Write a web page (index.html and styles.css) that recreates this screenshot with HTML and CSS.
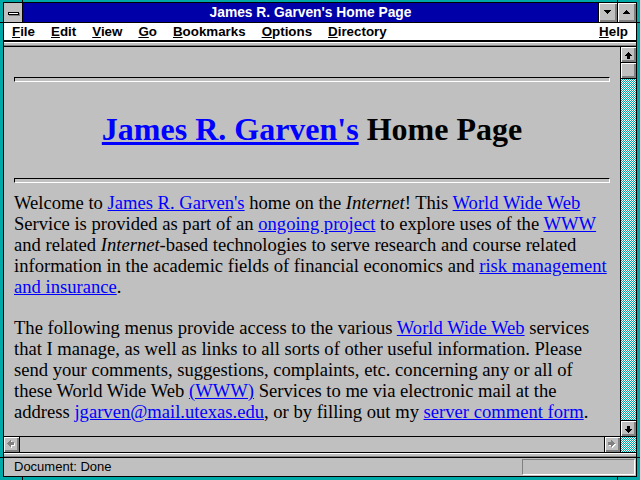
FILE: index.html
```html
<!DOCTYPE html>
<html>
<head>
<meta charset="utf-8">
<title>James R. Garven's Home Page</title>
<link rel="stylesheet" href="styles.css">
</head>
<body>
<div class="window">
  <div class="inner">
    <div class="titlebar">
      <div class="sysmenu"><span class="sysbar"></span></div>
      <div class="title">James R. Garven's Home Page</div>
      <div class="tbtn"><svg width="7" height="4" viewBox="0 0 7 4" shape-rendering="crispEdges"><path d="M0 0h7v1h-1v1h-1v1h-1v1h-1v-1h-1v-1h-1v-1h-1z" fill="#000"/></svg></div>
      <div class="tbtn"><svg width="7" height="4" viewBox="0 0 7 4" shape-rendering="crispEdges"><path d="M3 0h1v1h1v1h1v1h1v1h-7v-1h1v-1h1v-1h1z" fill="#000"/></svg></div>
    </div>
    <div class="menubar">
      <span class="mi"><u>F</u>ile</span>
      <span class="mi"><u>E</u>dit</span>
      <span class="mi"><u>V</u>iew</span>
      <span class="mi"><u>G</u>o</span>
      <span class="mi"><u>B</u>ookmarks</span>
      <span class="mi"><u>O</u>ptions</span>
      <span class="mi"><u>D</u>irectory</span>
      <span class="mi help"><u>H</u>elp</span>
    </div>
    <div class="toolsep"></div>
    <div class="main">
      <div class="content">
        <hr class="rule first">
        <h1><a href="#">James R. Garven's</a> Home Page</h1>
        <hr class="rule">
        <p class="p1">Welcome to <a href="#">James R. Garven's</a> home on the <i>Internet</i>! This <a href="#">World Wide Web</a><br>Service is provided as part of an <a href="#">ongoing project</a> to explore uses of the <a href="#">WWW</a><br>and related <i>Internet</i>-based technologies to serve research and course related<br>information in the academic fields of financial economics and <a href="#">risk management<br>and insurance</a>.</p>
        <p>The following menus provide access to the various <a href="#">World Wide Web</a> services<br>that I manage, as well as links to all sorts of other useful information. Please<br>send your comments, suggestions, complaints, etc. concerning any or all of<br>these World Wide Web <a href="#">(WWW)</a> Services to me via electronic mail at the<br>address <a href="#">jgarven@mail.utexas.edu</a>, or by filling out my <a href="#">server comment form</a>.</p>
      </div>
      <div class="vscroll">
        <div class="sbtn up"><svg width="15" height="15" viewBox="0 0 15 15" shape-rendering="crispEdges"><path d="M7 5h1v1h1v1h1v1h1v1h-2v3h-3v-3h-2v-1h1v-1h1v-1h1z" fill="#000"/></svg></div>
        <div class="sbtn thumb"></div>
        <div class="track"></div>
        <div class="sbtn down"><svg width="15" height="15" viewBox="0 0 15 15" shape-rendering="crispEdges"><path d="M6 5h3v3h2v1h-1v1h-1v1h-1v1h-1v-1h-1v-1h-1v-1h-1v-1h2z" fill="#000"/></svg></div>
      </div>
    </div>
    <div class="hscroll">
      <div class="sbtn left"><svg width="15" height="15" viewBox="0 0 15 15" shape-rendering="crispEdges"><g transform="translate(-1,0)"><path d="M5 7v1h1v1h1v1h1v1h1v-2h3v-3h-3v-2h-1v1h-1v1h-1v1h-1v1z" fill="#fff"/></g><g transform="translate(-2,-1)"><path d="M5 7v1h1v1h1v1h1v1h1v-2h3v-3h-3v-2h-1v1h-1v1h-1v1h-1v1z" fill="#808080"/></g></svg></div>
      <div class="htrack"></div>
      <div class="sbtn right"><svg width="15" height="15" viewBox="0 0 15 15" shape-rendering="crispEdges"><g transform="translate(1,0)"><path d="M10 7v1h-1v1h-1v1h-1v1h-1v-2h-3v-3h3v-2h1v1h1v1h1v1h1v1z" fill="#fff"/></g><g transform="translate(0,-1)"><path d="M10 7v1h-1v1h-1v1h-1v1h-1v-2h-3v-3h3v-2h1v1h1v1h1v1h1v1z" fill="#808080"/></g></svg></div>
      <div class="corner"></div>
    </div>
    <div class="statsep"></div>
    <div class="status">
      <span class="stext">Document: Done</span>
      <span class="field"></span>
    </div>
  </div>
</div>
</body>
</html>
```
FILE: styles.css
```css
html, body {
  margin: 0;
  padding: 0;
  background: #00a8a8;
}

.window {
  width: 640px;
  height: 480px;
  box-sizing: border-box;
  padding: 2px 3px 3px 3px;
  background-color: #00a8a8;
  background-image:
    linear-gradient(to right, transparent 22px, #000 22px, #000 23px, transparent 23px),
    linear-gradient(to right, transparent 617px, #000 617px, #000 618px, transparent 618px),
    linear-gradient(to bottom, transparent 22px, #000 22px, #000 23px, transparent 23px),
    linear-gradient(to bottom, transparent 457px, #000 457px, #000 458px, transparent 458px);
}

.inner {
  height: 100%;
  box-sizing: border-box;
  border: 1px solid #000;
  background: #c0c0c0;
  display: flex;
  flex-direction: column;
}

/* title bar */
.titlebar {
  display: flex;
  height: 19px;
  flex: none;
  background: #0000a8;
  border-bottom: 1px solid #000;
}

.sysmenu {
  width: 18px;
  background: #c0c0c0;
  border-right: 1px solid #000;
  display: flex;
  align-items: center;
  justify-content: center;
}

.sysbar {
  display: block;
  width: 9px;
  height: 1px;
  background: #fff;
  border: 1px solid #000;
  box-shadow: 1px 1px 0 #808080;
  margin-top: 1px;
}

.title {
  flex: 1;
  color: #fff;
  font-family: "Liberation Sans", Arial, sans-serif;
  font-weight: bold;
  font-size: 13.8px;
  line-height: 19px;
  text-align: center;
  white-space: nowrap;
}

.tbtn {
  width: 18px;
  border-left: 1px solid #000;
  background: #c0c0c0;
  box-shadow: inset 1px 1px 0 #fff, inset -1px -1px 0 #808080, inset -2px -2px 0 #808080;
  display: flex;
  align-items: center;
  justify-content: center;
}

.tbtn svg {
  display: block;
  margin: 0 1px 1px 0;
}

/* menu bar */
.menubar {
  display: flex;
  align-items: center;
  height: 17px;
  flex: none;
  background: #fff;
  border-bottom: 1px solid #000;
  font-family: "Liberation Sans", Arial, sans-serif;
  font-weight: bold;
  font-size: 13.35px;
  line-height: 17px;
  color: #000;
}

.mi {
  padding: 0 8px;
  white-space: nowrap;
}

.mi.help {
  margin-left: auto;
}

.toolsep {
  height: 6px;
  flex: none;
  box-sizing: border-box;
  border-top: 1px solid #000;
  border-bottom: 1px solid #000;
  background: linear-gradient(#fff 0 1px, #c0c0c0 1px 3px, #808080 3px 4px);
}

/* main area */
.main {
  flex: 1;
  display: flex;
  min-height: 0;
}

.content {
  flex: 1;
  background: #c0c0c0;
  padding: 0 10px;
  overflow: hidden;
  font-family: "Liberation Serif", "Times New Roman", serif;
  font-size: 18.6px;
  line-height: 21px;
  color: #000;
}

.rule {
  margin: 0;
  height: 5px;
  box-sizing: border-box;
  border-style: solid;
  border-width: 1px;
  border-color: #000 #fff #fff #000;
  background: transparent;
}

.rule.first {
  margin-top: 30px;
}

h1 {
  font-size: 32px;
  font-weight: bold;
  line-height: 37px;
  text-align: center;
  margin: 29px 0 30px;
  white-space: nowrap;
}

p {
  margin: 0 0 20px;
  white-space: nowrap;
}

p.p1 {
  margin-top: 9px;
}

a {
  color: #0000ff;
  text-decoration: underline;
}

/* scrollbars */
.sbtn {
  background: #c0c0c0;
  box-shadow: inset 1px 1px 0 #fff, inset -1px -1px 0 #808080, inset -2px -2px 0 #808080;
  flex: none;
}

.sbtn svg {
  display: block;
}

.vscroll {
  width: 16px;
  box-sizing: border-box;
  border-left: 1px solid #000;
  display: flex;
  flex-direction: column;
}

.vscroll .sbtn {
  width: 15px;
  height: 15px;
}

.up, .thumb {
  border-bottom: 1px solid #000;
}

.down {
  border-top: 1px solid #000;
}

.track, .corner {
  background: repeating-conic-gradient(#00a8a8 0 25%, #ffffff 0 50%) 0 0 / 2px 2px;
}

.track {
  flex: 1;
}

.hscroll {
  display: flex;
  height: 15px;
  flex: none;
  border-top: 1px solid #000;
  border-bottom: 1px solid #000;
}

.hscroll .sbtn {
  width: 15px;
  height: 15px;
}

.left {
  border-right: 1px solid #000;
}

.right {
  border-left: 1px solid #000;
}

.htrack {
  flex: 1;
  background: #c0c0c0;
}

.corner {
  width: 15px;
  border-left: 1px solid #000;
}

.statsep {
  height: 4px;
  flex: none;
  background: linear-gradient(#fff 0 1px, #c0c0c0 1px 3px, #808080 3px 4px);
}

/* status bar */
.status {
  height: 18px;
  flex: none;
  border-top: 1px solid #000;
  display: flex;
  align-items: center;
  justify-content: space-between;
  padding: 0 1px 0 10px;
  font-family: "Liberation Sans", Arial, sans-serif;
  font-size: 13px;
  color: #000;
}

.stext {
  line-height: 18px;
}

.field {
  width: 111px;
  height: 14px;
  border: 1px solid;
  border-color: #808080 #fff #fff #808080;
}
```
